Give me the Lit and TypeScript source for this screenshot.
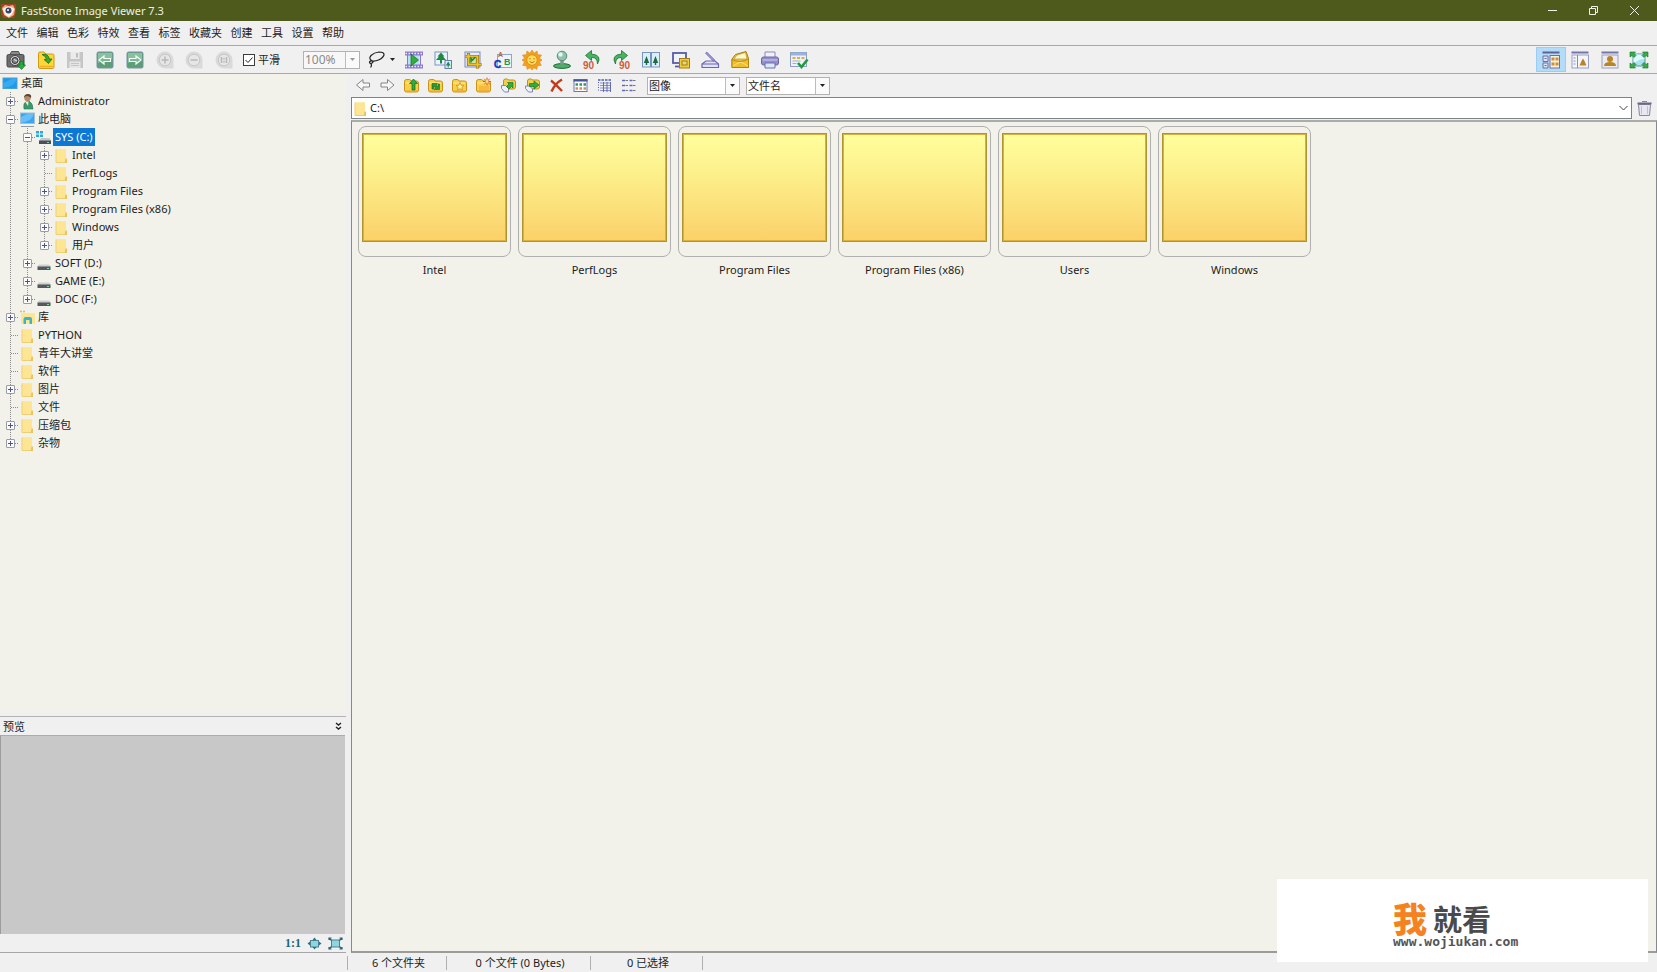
import { LitElement, html, svg, css, nothing } from "lit";
import { customElement, property, state } from "lit/decorators.js";
import { classMap } from "lit/directives/class-map.js";

const folderBase = svg`<path d="M1.500 4.500q0-2 2-2h3q1 0 1.500 1.500h5.500q2 0 2 2v7q0 2-2 2h-10q-2 0-2-2z" fill="#f9cf45" stroke="#c9921a"/><path d="M3 14h11" stroke="#eda52a"/><path d="M2.500 6h11.500" stroke="#ffedaa"/>`;
const zoomBubble = svg`<path d="M10 1.500a8.500 8.500 0 1 0 0 17h8.500v-8.500a8.500 8.500 0 0 0-8.500-8.500z" fill="#dadada"/><circle cx="10" cy="10" r="5.800" fill="#e6e6e6" stroke="#c6c6c6"/>`;
const greenTile = svg`<rect x="2" y="2" width="16" height="16" rx="1.500" fill="#5d9d78" stroke="#7795a4"/><path d="M3 3h14v6q-7 0-14 4z" fill="#9ccfae" opacity=".7"/>`;

/* 20 x 20 glyphs of the main toolbar */
const icons20: Record<string, unknown> = {
  camera: svg`<rect x="1" y="4.500" width="17" height="12.500" rx="1.500" fill="#6e6e6e" stroke="#444"/><path d="M4 4.500l1.500-3h7l1.500 3z" fill="#8a8a8a" stroke="#555"/><circle cx="9" cy="10.500" r="5" fill="#d6d6d6" stroke="#444"/><circle cx="9" cy="10.500" r="3" fill="#888" stroke="#333"/><path d="M8 9.500l3 1.500" stroke="#e8e8e8"/><path d="M14 11.500h3v3.500h2.500l-4 4.500-4-4.500h2.500z" fill="#22b43a" stroke="#0d7a1e" stroke-width=".7"/>`,
  open: svg`<path d="M2.500 3.500q0-1.500 1.500-1.500h4l2 2h6.500q1.500 0 1.500 1.500v11.500q0 1.500-1.500 1.500h-12.500q-1.500 0-1.500-1.500z" fill="#fcd73a" stroke="#d29a12"/><path d="M3.500 16.500h13.500" stroke="#f2ae22" stroke-width="1.500"/><path d="M6 4.500q6-1.500 7.500 4.500h2.500l-3.500 4.500-4.500-4h2.500q-.5-3.500-4.500-5z" fill="#3aa62f" stroke="#17711a" stroke-width=".8"/>`,
  save: svg`<path d="M2 2h16v16h-16z" fill="#c6c6c6"/><rect x="5.500" y="2" width="9" height="7" fill="#ebebeb"/><rect x="11" y="3" width="2" height="4.500" fill="#bdbdbd"/><rect x="4.500" y="11.500" width="11" height="6.500" fill="#e6e6e6"/><path d="M6 13.500h8M6 15.500h8" stroke="#c4c4c4"/>`,
  prev: svg`${greenTile}<path d="M9 6l-5 4 5 4v-2.500h6.500v-3h-6.500z" fill="#7fb596" stroke="#f4fff6" stroke-width="1.200"/>`,
  next: svg`${greenTile}<path d="M11 6l5 4-5 4v-2.500h-6.500v-3h6.500z" fill="#7fb596" stroke="#f4fff6" stroke-width="1.200"/>`,
  zoomIn: svg`${zoomBubble}<path d="M6.500 10h7M10 6.500v7" stroke="#b8b8b8" stroke-width="1.500"/>`,
  zoomOut: svg`${zoomBubble}<path d="M6.500 10h7" stroke="#b8b8b8" stroke-width="1.500"/>`,
  actual: svg`${zoomBubble}<path d="M7.500 7v6M12.500 7v6M10 8v1.500M10 11v1.500" stroke="#b8b8b8" stroke-width="1.500"/>`,
  slideshow: svg`<rect x="3.500" y="4" width="12" height="12" fill="#b9def4"/><path d="M1 3.500h18M1 16.500h18" stroke="#8b78cc" stroke-width="4"/><path d="M1.500 3.500h17M1.500 16.500h17" stroke="#efeaff" stroke-width="1.500" stroke-dasharray="1.500 1.500"/><path d="M3.500 5v10M16.500 5v10" stroke="#8b78cc"/><path d="M7 4l7.500 6-7.500 6z" fill="#2fae3c" stroke="#176e22" stroke-width=".7"/>`,
  resize: svg`<rect x="2" y="2" width="12.500" height="13" fill="#eaf4fc" stroke="#7f93c4"/><path d="M8 2.500l3.500 4h-1.500l3 3.500h-4v3.500h-2v-3.500h-4l3-3.500h-1.500z" fill="#1c8a40"/><rect x="12" y="10.500" width="6.500" height="8" fill="#d5ecf8" stroke="#6a7fae"/><path d="M15.200 11.500l2.300 4h-1.800v2h-1v-2h-1.800z" fill="#1c8a40"/>`,
  crop: svg`<rect x="2" y="2" width="15" height="15" fill="#e6ecfa" stroke="#7f86c4"/><rect x="4" y="6" width="10" height="9" fill="#cfe2a0"/><path d="M5.500 3v11.500h13M2.500 6.500h12v12" fill="none" stroke="#8b6c0c" stroke-width="3.200"/><path d="M5.500 3.500v11h12.500M3 6.500h11.500v11.500" fill="none" stroke="#efc02a" stroke-width="1.800"/><path d="M8 12.500v-4l1.500 1.500 3-3" fill="none" stroke="#238a32" stroke-width="1.600"/>`,
  rename: svg`<rect x="4.500" y="4.500" width="14" height="13" fill="#eef6fb" stroke="#8fa4cf"/><text x="5" y="7" font-size="7" font-weight="700" fill="#c2661c" font-family="Liberation Sans">A</text><text x="1" y="18" font-size="10" font-weight="700" fill="#2235c0" stroke="#2235c0" stroke-width=".5" font-family="Liberation Sans">C</text><text x="11" y="15" font-size="9" font-weight="700" fill="#1f9a46" font-family="Liberation Sans">B</text>`,
  sun: svg`<path d="M10 0l2 3.300 3-2.300.8 3.800 3.700.2-2 3.200 2.500 1.800-2.500 2 1.800 3.300-3.800.4-.6 3.600-3.200-1.600-1.700 2.300-1.700-2.300-3.200 1.600-.6-3.600-3.800-.4 1.800-3.300-2.500-2 2.500-1.800-2-3.200 3.700-.2.800-3.800 3 2.300z" fill="#f3a01c" stroke="#e08a1a" stroke-width=".6"/><circle cx="10" cy="10" r="5.300" fill="#ffdc5e" stroke="#e08a14"/><path d="M8 8v1.500M12 8v1.500M7.500 11.500q2.500 2.500 5 0" stroke="#c47a12"/>`,
  stamp: svg`<ellipse cx="10" cy="16" rx="8.500" ry="2.400" fill="#4fae66" stroke="#1f6e3c"/><path d="M8.500 10h3l.5 4.500h-4z" fill="#7c9c8c"/><circle cx="10" cy="6" r="4.800" fill="#8fc4ac" stroke="#5c8a7a"/><circle cx="8.500" cy="4.500" r="2.200" fill="#e4f6ee"/>`,
  rotateLeft: svg`<path d="M9.500.5l-6 5 6 5v-3q6-.5 6 6.500 5-9-6-10z" fill="#45b561" stroke="#1a7434" stroke-width=".8"/><text x="1" y="18.500" font-size="10" font-weight="700" fill="#cf5a3c" font-family="Liberation Sans">90</text>`,
  rotateRight: svg`<path d="M10.500.5l6 5-6 5v-3q-6-.5-6 6.500-5-9 6-10z" fill="#45b561" stroke="#1a7434" stroke-width=".8"/><text x="8" y="18.500" font-size="10" font-weight="700" fill="#cf5a3c" font-family="Liberation Sans">90</text>`,
  compare: svg`<rect x="1.500" y="2.500" width="8" height="14.500" fill="#d9effa" stroke="#7a94c0"/><rect x="10.500" y="2.500" width="8" height="14.500" fill="#d9effa" stroke="#7a94c0"/><path d="M5.500 6l2.700 7h-2v2h-1.400v-2h-2zM14.500 6l2.700 7h-2v2h-1.400v-2h-2z" fill="#1c6b45"/>`,
  wallpaper: svg`<rect x="2" y="3" width="13" height="10" fill="#eef2fc" stroke="#5a5aa8" stroke-width="1.800"/><path d="M4 16.500h6" stroke="#5a5aa8" stroke-width="1.800"/><rect x="8.500" y="8.500" width="10" height="9.500" fill="#f2cc3c" stroke="#a47c10"/><rect x="11" y="11" width="5" height="4" fill="#e6d68c" stroke="#a47c10"/>`,
  scanner: svg`<path d="M2 14l4-3h9l3.500 3v3.500h-16.500z" fill="#e3e1f6" stroke="#6a66b4" stroke-width="1.200"/><path d="M2 14h16.500" stroke="#6a66b4"/><path d="M6 2.500l8.500 8.500" stroke="#6a66b4" stroke-width="2.400"/><path d="M6.500 3l7.500 7.500" stroke="#d2cff0" stroke-width=".8"/>`,
  mail: svg`<path d="M2 9l3.500-4.500 10.500-3 2.500 7v9h-16.500z" fill="#f4c72e" stroke="#a87c0c"/><path d="M4 9l3-4 8.500-2.500 1.500 6.500z" fill="#fff7cc" stroke="#b48a1c" stroke-width=".6"/><path d="M2 9.500q8 4 16.500-.5v8.500h-16.500z" fill="#f0bf2a" stroke="#a87c0c" stroke-width=".8"/><path d="M3 16l6-3.500h3l6 3.500" stroke="#fbe28a"/>`,
  print: svg`<path d="M5 8v-6h10v6" fill="#f2f2fc" stroke="#8a88bc"/><rect x="1.500" y="7" width="17" height="8" rx="2" fill="#948fca" stroke="#6a68a8"/><path d="M2.500 10h15" stroke="#cfccf0"/><path d="M5 13h10v5h-10z" fill="#dce8f6" stroke="#6a70b0"/>`,
  settings: svg`<rect x="1.500" y="2.500" width="16" height="14" fill="#eef1f8" stroke="#8fa0c6"/><rect x="2" y="2.500" width="15" height="3" fill="#9ab2dc"/><path d="M3.500 8h3M8 8h3M12.500 8h3" stroke="#d8b14a" stroke-width="2"/><path d="M3.500 11h8M3.500 13.500h4" stroke="#a4afc4"/><path d="M9 13l3.500 4 6-7.500" fill="none" stroke="#1f9a3c" stroke-width="2.600"/>`,
  lasso: svg`<path d="M6.500 11q-4.500-2-1.500-5.500 3-3 8-3.500 5.500 0 5 3-1 3-5.500 5-3 1.300-6 1zM6.500 11q-3-.5-3 1.500.5 1.500 2.500.5 1.500-1 .5-2M4.500 13.500q2 1.500 0 4" fill="none" stroke="#222" stroke-width="1.200"/>`,
  viewBrowse: svg`<path d="M1.500 2.500h17" stroke="#5f6299" stroke-width="2"/><path d="M2 6h5v5.500h-5zM2 13h5v5h-5z" fill="#dfe2f2" stroke="#6a6ea4"/><path d="M3.500 8.500h2M3.500 15.500h2" stroke="#6a6ea4"/><rect x="9" y="5.500" width="9.500" height="12.500" fill="#fbf1de" stroke="#6a6ea4"/><path d="M10.500 7.500h3v3h-3zM14.500 7.500h3v3h-3zM10.500 12.500h3v3h-3zM14.500 12.500h3v3h-3z" fill="#c98f3c"/>`,
  viewWindow: svg`<path d="M1.500 2.500h17" stroke="#7276a8" stroke-width="2"/><rect x="2" y="5" width="16.500" height="13" fill="#f5f6fb" stroke="#9a9ec6"/><path d="M7.500 5v13M3.500 8h2M3.500 11h2M3.500 14h2" stroke="#8489ba"/><path d="M13 8.500l1.500 2.500 2 4.500h-7l2-4.500z" fill="#b98426"/>`,
  viewSingle: svg`<path d="M1.500 2.500h17" stroke="#7276a8" stroke-width="2"/><rect x="2" y="5" width="16" height="13" fill="#ecebef" stroke="#9a9ec6"/><circle cx="10" cy="9" r="3" fill="#b98426"/><path d="M4 16q0-4 6-4t6 4z" fill="#b98426"/>`,
  fullscreen: svg`<rect x="4" y="4" width="12" height="12" fill="#a8e3ee" stroke="#4a9aa8"/><path d="M4.500 4.500h11v4.500q-6 0-11 5z" fill="#def8fc"/><path d="M1 2h5.500l-1.500 1.500 2 2-2 2-2-2-2 1.500zM19 2h-5.500l1.500 1.500-2 2 2 2 2-2 2 1.500zM1 18h5.500l-1.500-1.500 2-2-2-2-2 2-2-1.500zM19 18h-5.500l1.500-1.500-2-2 2-2 2 2 2-1.500z" fill="#37ad45" stroke="#15702a" stroke-width=".6"/>`,
};

/* 17 x 17 glyphs of the folder toolbar and the small panels */
const icons17: Record<string, unknown> = {
  back: svg`<path d="M8 2.500l-6.500 5.500 6.500 5.500v-3.500h6.500v-4h-6.500z" fill="#f7f7f7" stroke="#858585"/>`,
  forward: svg`<path d="M8.500 2.500l6.500 5.500-6.500 5.500v-3.500h-6.500v-4h6.500z" fill="#f7f7f7" stroke="#858585"/>`,
  up: svg`${folderBase}<path d="M10.500 2l4 4.500h-2.500v6.500h-3v-6.500h-2.500z" fill="#2fae3c" stroke="#116a1d" stroke-width=".7"/>`,
  refresh: svg`${folderBase}<path d="M5 12v-5.500h5.500l-1.500 1.500 2 2v-3h1.500v5.500h-5.500l1.500-1.500-2-2v3z" fill="#2a9a36" stroke="#116a1d" stroke-width=".6"/>`,
  favorite: svg`${folderBase}<path d="M9 5.500l1.200 2.700 2.800.3-2.100 1.900.6 2.800-2.500-1.500-2.500 1.500.6-2.800-2.100-1.900 2.800-.3z" fill="#fff3a0" stroke="#d98a1a" stroke-width=".8"/>`,
  newFolder: svg`${folderBase}<path d="M4 9h10v5h-10z" fill="#f5a83a" opacity=".6"/><path d="M12 .5v8M8 4.500h8M9.200 1.700l5.600 5.600M14.800 1.700l-5.600 5.600" stroke="#e2502a"/><circle cx="12" cy="4.500" r="1.400" fill="#ffe08a"/>`,
  copyTo: svg`<path d="M3.500 4q0-2 2-2h2l1 1h5q2 0 2 2v5q0 2-2 2h-8q-2 0-2-2z" fill="#f3d04a" stroke="#bb901c"/><path d="M1.500 8.500h4l3 3v3.500h-4l-3-3.500z" fill="#eef1fb" stroke="#7f86bb"/><path d="M6.500 9.500l2.500-2.500-1.500-1.500h5.500v5.500l-1.500-1.500-2.500 2.500z" fill="#2fae3c" stroke="#116a1d" stroke-width=".6"/>`,
  moveTo: svg`<path d="M3.500 4q0-2 2-2h2l1 1h5q2 0 2 2v5q0 2-2 2h-8q-2 0-2-2z" fill="#f3d04a" stroke="#bb901c"/><path d="M1.500 9h4l3 3v3h-4l-3-3.500z" fill="#eef1fb" stroke="#7f86bb"/><path d="M5.500 6.500h4.500v-2.500l5 4-5 4v-2.500h-4.500z" fill="#2fae3c" stroke="#116a1d" stroke-width=".6"/>`,
  remove: svg`<path d="M3 3.500q5 4 11 10.500M14 2.500q-7 4-10.500 12" fill="none" stroke="#c23c1c" stroke-width="2.400"/>`,
  thumbs: svg`<rect x="2" y="2.500" width="13" height="12" fill="#fff" stroke="#6a76ae"/><path d="M1.500 3.500h14" stroke="#47529c" stroke-width="2"/><path d="M3.500 7.500h10.500" stroke="#2b9a66" stroke-width="2.500" stroke-dasharray="2.500 1.500"/><path d="M3.500 11.500h10.500" stroke="#d98a5c" stroke-width="2.500" stroke-dasharray="2.500 1.500"/>`,
  details: svg`<path d="M2 3h13" stroke="#4f5cb4" stroke-width="1.400" stroke-dasharray="2.500 1"/><path d="M4 6h11M4 8.500h11M4 11h11M4 13.500h11" stroke="#8b92cc" stroke-width="1.200"/><path d="M2.500 5v10" stroke="#4f5cb4" stroke-dasharray="1 1.500"/><path d="M7.500 5v10M11 5v10M14.500 5v10" stroke="#5560b0" stroke-width=".9"/>`,
  list: svg`<path d="M2 3.500h3M2 8.500h3M2 13.500h3M9.500 3.500h3M9.500 8.500h3M9.500 13.500h3" stroke="#5f6bc0" stroke-width="1.500"/><path d="M5.500 3.500h2.500M5.500 8.500h2.500M5.500 13.500h2.500M13 3.500h2.500M13 8.500h2.500M13 13.500h2.500" stroke="#555" stroke-width=".8"/>`,
  trash: svg`<path d="M2.500 4.500h12l-1 11h-10z" fill="#e9e7f0" stroke="#8a869c"/><path d="M1.500 3.500h14" stroke="#6b6786" stroke-width="2"/><path d="M6 1.500h5" stroke="#8a869c"/><path d="M5.500 6v8M11.500 6v8" stroke="#c4c0d2"/>`,
  fit: svg`<rect x="4.500" y="5.500" width="8" height="6.500" fill="#8fd4e0" stroke="#4a8494"/><path d="M8.500 2.500l2 2.500h-4zM8.500 14.500l2-2.500h-4zM1.500 8.500l2.500-2v4zM15.500 8.500l-2.500-2v4z" fill="#2b7486"/>`,
  full: svg`<rect x="4.500" y="5" width="8" height="7" fill="#8fd4e0" stroke="#4a8494"/><path d="M2 5v-2h2.500M12.500 3h2.500v2M2 12v2h2.500M12.500 14h2.500v-2M2.500 3.500l2 2M14.500 3.500l-2 2M2.500 13.500l2-2M14.500 13.500l-2-2" fill="none" stroke="#2b5f74" stroke-width="1.200"/>`,
  desktop: svg`<rect x="1" y="3" width="14" height="10.500" fill="#1c9bea" stroke="#4a9fd4"/><path d="M1.500 13v-5l9-4.500h4q-1 8-13 9.500z" fill="#47b6f5" opacity=".6"/>`,
  user: svg`<path d="M5 16q-1-6 2-7l3-1q4 2 4 8z" fill="#3a9a6c" stroke="#2a7450" stroke-width=".6"/><circle cx="8.500" cy="5" r="3.200" fill="#b98a66"/><path d="M5 5q0-4 4-4t3 4q-2-2-4-2-2 0-3 2z" fill="#5a4636"/><path d="M6.500 9l2.500 4 .5-4.500z" fill="#e8f4ee"/>`,
  pc: svg`<rect x="1.500" y="2" width="14" height="10.500" fill="#39a7ee" stroke="#9fc0d8"/><path d="M2 12v-6l7-3.500h6q-2 8-13 9.500z" fill="#7cc9f8" opacity=".7"/><path d="M2 15.500h13" stroke="#8d9ba8"/>`,
  drive: svg`<path d="M3 9.500h10l2 2.500h-14z" fill="#cdcfd0"/><rect x="1.500" y="11.500" width="13" height="3.500" fill="#55595c"/><path d="M11 13.500h2" stroke="#7fd6a0"/>`,
  system: svg`<path d="M0 2h3v2.500h-3zM4 2h3v2.500h-3zM0 5.500h3v2.500h-3zM4 5.500h3v2.500h-3z" fill="#2ba8e0"/><path d="M5 9h8.500l1.500 3h-12z" fill="#c4c7c9"/><rect x="3" y="11.500" width="12" height="3.500" fill="#4b5054"/><path d="M11 13.500h2" stroke="#7fd6a0"/>`,
  folder: svg`<path d="M3 2.500h10v13h-10z" fill="#fbe08a"/><path d="M3 2.500h10v10l-2 3h-8z" fill="#fde594"/><path d="M12.500 11.500h1.500v4.500h-2.500z" fill="#e8c45e"/><path d="M3 2.500v13h9" fill="none" stroke="#efcf74"/>`,
  library: svg`<path d="M2 4h14v10.500h-14z" fill="#fbe694"/><path d="M1 2.500h5" stroke="#e0bd5c" stroke-width="1.500" stroke-dasharray="2 1"/><path d="M4.500 15v-5q0-2 2-2h4.500q2 0 2 2v5h-2.500v-4h-3.500v4z" fill="#3cb4c4"/>`,
};

@customElement("fs-icon")
export class FsIcon extends LitElement {
  @property() name = "";
  static styles = css`
    :host { display: block; flex: none; line-height: 0; }
  `;
  render() {
    const large = this.name in icons20;
    const n = large ? 20 : 17;
    return html`<svg width=${n} height=${n} viewBox="0 0 ${n} ${n}" aria-hidden="true" fill="none">${large ? icons20[this.name] : icons17[this.name]}</svg>`;
  }
}

interface Node { label: string; icon: string; level: number; toggle?: "+" | "-"; last?: boolean; }

const tree: Node[] = [
  { label: "桌面", icon: "desktop", level: 0 },
  { label: "Administrator", icon: "user", level: 1, toggle: "+" },
  { label: "此电脑", icon: "pc", level: 1, toggle: "-" },
  { label: "SYS (C:)", icon: "system", level: 2, toggle: "-" },
  { label: "Intel", icon: "folder", level: 3, toggle: "+" },
  { label: "PerfLogs", icon: "folder", level: 3 },
  { label: "Program Files", icon: "folder", level: 3, toggle: "+" },
  { label: "Program Files (x86)", icon: "folder", level: 3, toggle: "+" },
  { label: "Windows", icon: "folder", level: 3, toggle: "+" },
  { label: "用户", icon: "folder", level: 3, toggle: "+", last: true },
  { label: "SOFT (D:)", icon: "drive", level: 2, toggle: "+" },
  { label: "GAME (E:)", icon: "drive", level: 2, toggle: "+" },
  { label: "DOC (F:)", icon: "drive", level: 2, toggle: "+", last: true },
  { label: "库", icon: "library", level: 1, toggle: "+" },
  { label: "PYTHON", icon: "folder", level: 1 },
  { label: "青年大讲堂", icon: "folder", level: 1 },
  { label: "软件", icon: "folder", level: 1 },
  { label: "图片", icon: "folder", level: 1, toggle: "+" },
  { label: "文件", icon: "folder", level: 1 },
  { label: "压缩包", icon: "folder", level: 1, toggle: "+" },
  { label: "杂物", icon: "folder", level: 1, toggle: "+", last: true },
];

@customElement("fs-tree")
export class FsTree extends LitElement {
  @state() private selected = "SYS (C:)";
  static styles = css`
    :host { display: block; overflow: auto; padding-left: 2px; background: #f2f2ea; }
    ul { list-style: none; margin: 0; padding: 0; }
    li { display: flex; height: 18px; }
    .cell { flex: none; width: 17px; display: grid; place-items: center; }
    .dots { background: repeating-linear-gradient(#8c8c8c 0 1px, transparent 1px 2px) 8px 0 / 1px 100% no-repeat; }
    .branch { background:
      repeating-linear-gradient(#8c8c8c 0 1px, transparent 1px 2px) 8px 0 / 1px 100% no-repeat,
      repeating-linear-gradient(90deg, #8c8c8c 0 1px, transparent 1px 2px) 9px 9px / 8px 1px no-repeat; }
    .branch.last { background-size: 1px 50%, 8px 1px; }
    .toggle { width: 9px; height: 9px; padding: 0; border: 1px solid #9a9aa8; border-radius: 1px; display: block; background:
      linear-gradient(#4a558f, #4a558f) center / 5px 1px no-repeat, #fbfbfb; }
    .plus { background:
      linear-gradient(#4a558f, #4a558f) center / 5px 1px no-repeat,
      linear-gradient(#4a558f, #4a558f) center / 1px 5px no-repeat, #fbfbfb; }
    .label { font: inherit; line-height: 18px; color: #1c1c1c; background: none; border: 0; margin: 0; padding: 0 2px; white-space: nowrap; }
    .label.on { background: #0b78d4; color: #fff; }
  `;
  render() {
    return html`<ul role="tree" aria-label="文件夹">${tree.map((n) => html`
      <li role="treeitem" aria-level=${n.level + 1} aria-selected=${n.label === this.selected}>
        ${Array.from({ length: Math.max(0, n.level - 1) }, () => html`<span class="cell dots"></span>`)}
        ${n.level ? html`<span class=${classMap({ cell: true, branch: true, last: !!n.last })}>
          ${n.toggle ? html`<button class=${classMap({ toggle: true, plus: n.toggle === "+" })} aria-label="展开 ${n.label}"></button>` : nothing}
        </span>` : nothing}
        <span class="cell"><fs-icon name=${n.icon}></fs-icon></span>
        <button class=${classMap({ label: true, on: n.label === this.selected })} @click=${() => (this.selected = n.label)}>${n.label}</button>
      </li>`)}</ul>`;
  }
}

const menus = ["文件", "编辑", "色彩", "特效", "查看", "标签", "收藏夹", "创建", "工具", "设置", "帮助"];
const fileTools = [["camera", "导入"], ["open", "打开"], ["save", "保存"], ["prev", "上一个"], ["next", "下一个"], ["zoomIn", "放大"], ["zoomOut", "缩小"], ["actual", "实际大小"]];
const editTools = [["slideshow", "幻灯片"], ["resize", "调整大小"], ["crop", "裁剪"], ["rename", "重命名"], ["sun", "光线"], ["stamp", "仿制图章"], ["rotateLeft", "向左旋转"], ["rotateRight", "向右旋转"], ["compare", "比较"], ["wallpaper", "墙纸"], ["scanner", "扫描"], ["mail", "邮件"], ["print", "打印"], ["settings", "设置"]];
const viewTools = [["viewBrowse", "浏览"], ["viewWindow", "窗口"], ["viewSingle", "单图"], ["fullscreen", "全屏"]];
const folderTools = [["back", "后退"], ["forward", "前进"], ["up", "向上"], ["refresh", "刷新"], ["favorite", "收藏"], ["newFolder", "新建文件夹"], ["copyTo", "复制到"], ["moveTo", "移动到"], ["remove", "删除"], ["thumbs", "缩略图"], ["details", "详细"], ["list", "列表"]];
const folders = ["Intel", "PerfLogs", "Program Files", "Program Files (x86)", "Users", "Windows"];

@customElement("app-root")
export class AppRoot extends LitElement {
  @state() private view = "viewBrowse";

  static styles = css`
    :host { display: flex; flex-direction: column; height: 100vh; overflow: hidden; background: #f0f0f0; color: #1c1c1c;
      font-family: "Noto Sans", "Noto Sans CJK SC", sans-serif; font-size: 11px; line-height: 18px; }
    * { box-sizing: border-box; }
    button, input, select { font: inherit; color: inherit; border-radius: 0; }
    button { background: none; border: 0; padding: 0; }

    .title { flex: none; display: flex; align-items: center; height: 21px; padding: 0 2px 0 1px; background: #4d5a1c; color: #eef0e2; }
    .title h1 { flex: 1; margin: 0 0 0 5px; font-size: 11px; font-weight: 400; }
    .caption { width: 41px; height: 21px; display: grid; place-items: center; }

    .menu { flex: none; display: flex; align-items: center; justify-content: space-between; width: 338px; height: 24px; margin-left: 6px; }

    .toolbar { flex: none; display: flex; align-items: center; height: 29px; border-top: 1px solid #a9a9a9; border-bottom: 1px solid #a9a9a9; padding: 0 3px 0 1px; }
    .set { flex: none; display: grid; grid-auto-flow: column; grid-auto-columns: 1fr; height: 25px; }
    .set button { display: grid; place-items: center; }
    .set .on { background: #b3dcf8; outline: 1px solid #9bcdf0; outline-offset: -1px; }
    .file { width: 238px; }
    .edit { width: 415px; }
    .views { width: 118px; margin-left: auto; }
    .smooth { display: flex; align-items: center; gap: 3px; margin: 0 23px 0 4px; }
    .smooth input { appearance: none; width: 12px; height: 12px; margin: 0; border: 1px solid #3c3c3c; background: #fff; }
    .tick { display: grid; }
    .tick > * { grid-area: 1 / 1; pointer-events: none; }
    .tick > input { pointer-events: auto; }
    .tick input:not(:checked) + svg { visibility: hidden; }
    .lasso { display: flex; align-items: center; gap: 4px; margin: 0 4px 0 6px; }

    .combo { flex: none; display: grid; grid-template-columns: 1fr 14px; height: 18px; border: 1px solid #b2b2b2; background: #fff; }
    .combo select { grid-area: 1 / 1 / 2 / 3; appearance: none; border: 0; background: none; padding: 0 1px; line-height: 16px; outline: 0; }
    .combo .arrow { grid-area: 1 / 2; display: grid; place-items: center; border-left: 1px solid #bcbcbc; pointer-events: none; background: #fafafa; }
    .zoom { width: 57px; color: #8a8a8a; background: #f7f7f7; }
    .zoom select { opacity: 1; color: inherit; font-size: 12px; }
    .kind { width: 93px; margin-left: 6px; }
    .sort { width: 84px; margin-left: 6px; }

    .main { flex: 1; min-height: 0; display: grid; grid-template-columns: 346px minmax(0, 1fr); column-gap: 5px; }
    .side { display: flex; flex-direction: column; min-height: 0; border-bottom: 1px solid #a6a6a6; }
    fs-tree { flex: 1; min-height: 0; }
    .preview-head { flex: none; display: flex; align-items: flex-end; justify-content: space-between; height: 19px; margin-top: 4px; padding: 0 4px 0 3px; border-top: 1px solid #b4b4b4; }
    .preview-head h2 { margin: 0; font-size: 11px; line-height: 17px; font-weight: 400; }
    .preview-head button { align-self: center; display: grid; }
    .preview { flex: none; height: 199px; background: #c8c8c8; border-top: 1px solid #acacac; border-left: 1px solid #9c9c9c; margin-right: 1px; }
    .preview-tools { flex: none; display: flex; align-items: center; justify-content: flex-end; gap: 4px; height: 18px; padding-right: 2px; }
    .ratio { font: 700 12px/18px "Liberation Serif", serif; color: #1f6672; margin-right: 1px; }

    .browse { display: flex; flex-direction: column; min-height: 0; }
    .folder-bar { flex: none; display: flex; align-items: center; height: 23px; }
    .folder-set { width: 290px; }
    .address { flex: none; display: flex; align-items: center; height: 22px; }
    .path { flex: 1; display: flex; align-items: center; height: 22px; border: 1px solid #7d8489; background: #fff; padding: 0 3px 0 0; }
    .path input { flex: 1; min-width: 0; border: 0; padding: 0 1px; background: none; outline: 0; }
    .bin { width: 25px; display: grid; place-items: center; }
    .files { flex: 1; min-height: 0; margin-top: 1px; overflow: hidden; background: #f2f2ea; border: 1px solid #85898d; border-top: 2px solid #a9aca8; border-bottom: 2px solid #9b9b9b; padding: 4px 6px; }
    .grid { display: flex; flex-wrap: wrap; gap: 7px; list-style: none; margin: 0; padding: 0; }
    .item { width: 153px; display: flex; flex-direction: column; align-items: stretch; text-align: center; }
    .frame { height: 131px; border: 1px solid #b0b0b0; border-radius: 8px; padding: 6px 3px; }
    .thumb { display: block; height: 109px; border: 1px solid #b0952f; box-shadow: inset 0 0 0 1px #dcae3a; background: linear-gradient(#ffff9c, #fdf38f 30%, #fbd069); }
    .name { line-height: 26px; }

    .status { flex: none; display: flex; align-items: center; height: 19px; }
    .status span { border-left: 1px solid #b0b0b0; line-height: 14px; height: 14px; padding-left: 3px; text-align: center; }
    .pad { width: 347px; }
    .status .s1 { width: 99px; }
    .status .s2 { width: 144px; }
    .status .s3 { width: 113px; border-right: 1px solid #b0b0b0; }

    .mark { position: absolute; right: 9px; bottom: 10px; width: 371px; height: 83px; background: #fff; padding: 22px 0 0 116px; display: flex; flex-direction: column; }
    .brand { display: flex; align-items: center; gap: 6px; font: 700 29px/34px "Noto Sans CJK SC", sans-serif; color: #4a4a4a; }
    .brand b { color: #f58220; font-size: 34px; }
    .site { font: 700 13px/14px "DejaVu Sans Mono", monospace; color: #555; text-decoration: none; }
  `;

  private tools(cls: string, items: string[][], current = "") {
    return html`<div class="set ${cls}">${items.map(([icon, label]) => html`
      <button class=${classMap({ on: icon === current })} aria-label=${label} title=${label}><fs-icon name=${icon}></fs-icon></button>`)}</div>`;
  }

  private combo(cls: string, label: string, value: string, disabled = false) {
    return html`<div class="combo ${cls}">
      <select aria-label=${label} ?disabled=${disabled}><option>${value}</option></select>
      <span class="arrow"><svg width="5" height="3" viewBox="0 0 5 3"><path d="M0 0h5l-2.500 3z" fill=${disabled ? "#999" : "#222"}/></svg></span>
    </div>`;
  }

  render() {
    return html`
      <header class="title">
        <svg width="15" height="16" viewBox="0 0 15 16" aria-hidden="true"><path d="M0 1h15v9l-2 5h-11l-2-5z" fill="#a8402a"/><path d="M1 5l3-3 4 1 4-1 2 4-1 6-5 3-5-3z" fill="#f0b07c"/><path d="M1.500 6q6-5 12 0l-3 6-3 2-3-2z" fill="#fff3e8"/><circle cx="7.500" cy="7.500" r="3" fill="#34446e"/><circle cx="7" cy="7" r="1" fill="#fff"/></svg>
        <h1>FastStone Image Viewer 7.3</h1>
        <button class="caption" aria-label="最小化"><svg width="11" height="11"><path d="M1 5.500h9" stroke="#f0f2e4"/></svg></button>
        <button class="caption" aria-label="还原"><svg width="11" height="11" fill="none" stroke="#f0f2e4"><path d="M1.500 3.500h6v6h-6zM3.500 3v-1.500h6v6h-1.500"/></svg></button>
        <button class="caption" aria-label="关闭"><svg width="11" height="11"><path d="M1 1l9 9M10 1l-9 9" stroke="#f0f2e4"/></svg></button>
      </header>

      <nav class="menu">${menus.map((m) => html`<button>${m}</button>`)}</nav>

      <div class="toolbar">
        ${this.tools("file", fileTools)}
        <label class="smooth">
          <span class="tick"><input type="checkbox" checked /><svg width="12" height="12" fill="none"><path d="M2.500 6l2.500 2.500 4.500-5" stroke="#222"/></svg></span>平滑
        </label>
        ${this.combo("zoom", "缩放", "100%", true)}
        <button class="lasso" aria-label="选择"><fs-icon name="lasso"></fs-icon><svg width="5" height="3"><path d="M0 0h5l-2.500 3z" fill="#222"/></svg></button>
        ${this.tools("edit", editTools)}
        <div class="set views">${viewTools.map(([icon, label]) => html`
          <button class=${classMap({ on: icon === this.view })} aria-label=${label} @click=${() => (this.view = icon)}><fs-icon name=${icon}></fs-icon></button>`)}</div>
      </div>

      <div class="main">
        <aside class="side">
          <fs-tree></fs-tree>
          <div class="preview-head"><h2>预览</h2>
            <button aria-label="折叠"><svg width="7" height="9" fill="none" stroke="#222" stroke-width="1.400"><path d="M1 1l2.500 2 2.500-2M1 5l2.500 2 2.500-2"/></svg></button>
          </div>
          <div class="preview"></div>
          <div class="preview-tools">
            <button class="ratio">1:1</button>
            <button aria-label="适合窗口"><fs-icon name="fit"></fs-icon></button>
            <button aria-label="全屏预览"><fs-icon name="full"></fs-icon></button>
          </div>
        </aside>

        <section class="browse">
          <div class="folder-bar">
            ${this.tools("folder-set", folderTools)}
            ${this.combo("kind", "类型", "图像")}
            ${this.combo("sort", "排序", "文件名")}
          </div>
          <div class="address">
            <div class="path"><fs-icon name="folder"></fs-icon><input aria-label="路径" value="C:\\" />
              <svg width="9" height="6" fill="none" stroke="#444"><path d="M.5 1l4 4 4-4"/></svg></div>
            <button class="bin" aria-label="回收站"><fs-icon name="trash"></fs-icon></button>
          </div>
          <div class="files">
            <ul class="grid">${folders.map((f) => html`
              <li class="item"><div class="frame"><span class="thumb"></span></div><span class="name">${f}</span></li>`)}</ul>
          </div>
        </section>
      </div>

      <footer class="status">
        <div class="pad"></div>
        <span class="s1">6 个文件夹</span><span class="s2">0 个文件 (0 Bytes)</span><span class="s3">0 已选择</span>
      </footer>

      <div class="mark">
        <div class="brand"><b>我</b>就看</div>
        <a class="site" href="#">www.wojiukan.com</a>
      </div>
    `;
  }
}
